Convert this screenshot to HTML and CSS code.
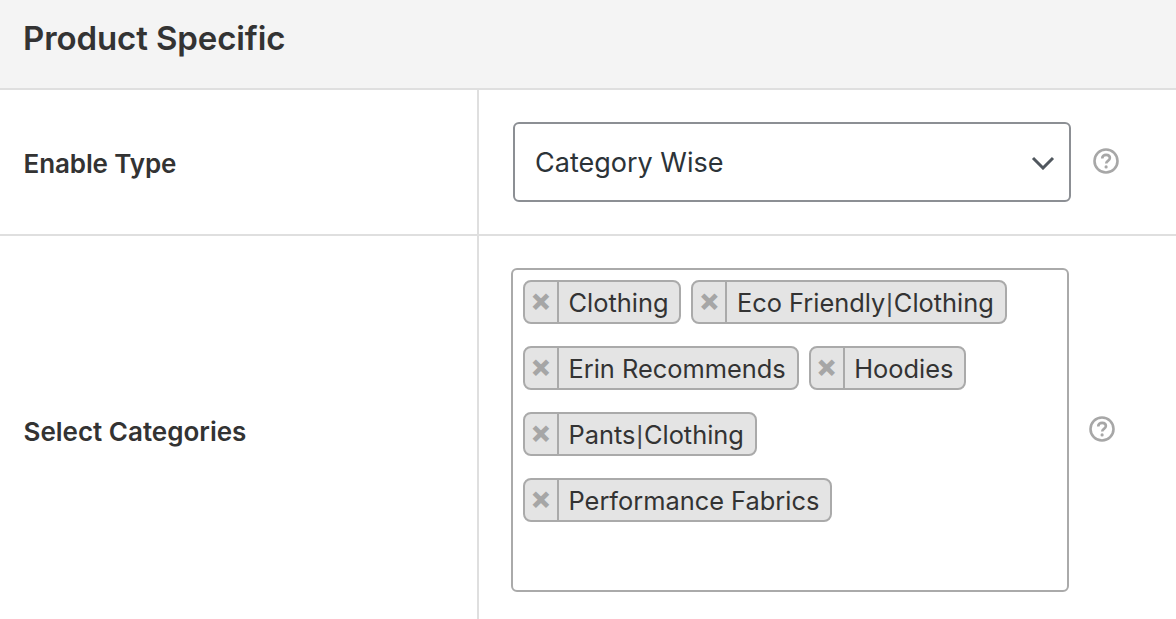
FILE: index.html
```html
<!DOCTYPE html>
<html lang="en">
<head>
    <meta charset="UTF-8">
    <meta name="viewport" content="width=device-width, initial-scale=1.0">
    <title>Product Specific</title>
    <link rel="stylesheet" href="styles.css">
</head>
<body>
    <h2 class="section-title">Product Specific</h2>

    <div class="row row-type">
        <div class="row-label">Enable Type</div>
        <div class="row-field">
            <div class="select-box">
                <span>Category Wise</span>
                <svg class="chevron" width="24" height="14" viewBox="0 0 24 14"><path d="M2 2l10 10L22 2" fill="none" stroke="#50575e" stroke-width="3"/></svg>
            </div>
            <svg class="help-icon" width="26" height="26" viewBox="0 0 26 26"><circle cx="13" cy="13" r="11.5" fill="none" stroke="#a7a7a7" stroke-width="2.6"/><path d="M9.2 10.4c0-2.2 1.7-3.5 3.900-3.500 2.200 0 3.800 1.300 3.800 3.200 0 2.800-3.700 2.700-3.700 5.300" fill="none" stroke="#a7a7a7" stroke-width="2.600"/><circle cx="13.100" cy="18.900" r="1.600" fill="#a7a7a7"/></svg>
        </div>
    </div>

    <div class="row row-cats">
        <div class="row-label">Select Categories</div>
        <div class="row-field">
            <div class="multi-box">
                <div class="tag-line">
                    <span class="tag"><span class="tag-x">×</span><span class="tag-text">Clothing</span></span>
                    <span class="tag"><span class="tag-x">×</span><span class="tag-text">Eco Friendly<span class="pipe">|</span>Clothing</span></span>
                </div>
                <div class="tag-line">
                    <span class="tag"><span class="tag-x">×</span><span class="tag-text">Erin Recommends</span></span>
                    <span class="tag"><span class="tag-x">×</span><span class="tag-text">Hoodies</span></span>
                </div>
                <div class="tag-line">
                    <span class="tag"><span class="tag-x">×</span><span class="tag-text">Pants<span class="pipe">|</span>Clothing</span></span>
                </div>
                <div class="tag-line">
                    <span class="tag"><span class="tag-x">×</span><span class="tag-text">Performance Fabrics</span></span>
                </div>
            </div>
            <svg class="help-icon help-icon-cats" width="26" height="26" viewBox="0 0 26 26"><circle cx="13" cy="13" r="11.5" fill="none" stroke="#a7a7a7" stroke-width="2.6"/><path d="M9.2 10.4c0-2.2 1.7-3.5 3.900-3.500 2.200 0 3.800 1.300 3.800 3.200 0 2.800-3.700 2.700-3.700 5.300" fill="none" stroke="#a7a7a7" stroke-width="2.600"/><circle cx="13.100" cy="18.900" r="1.600" fill="#a7a7a7"/></svg>
        </div>
    </div>
</body>
</html>
```

FILE: styles.css
```css
html, body {
    height: 100%;
}

body {
    margin: 0;
    background-color: #fff;
    color: #333;
    font-family: Inter, "Liberation Sans", sans-serif;
    overflow: hidden;
}

.section-title {
    margin: 0;
    height: 88px;
    padding: 0 0 0 23px;
    background-color: #f4f4f4;
    border-bottom: 2px solid #dfdfdf;
    font-size: 33px;
    font-weight: 600;
    line-height: 77px;
    letter-spacing: -0.1px;
}

.row {
    display: flex;
    border-bottom: 2px solid #dfdfdf;
}

.row-cats {
    border-bottom: none;
}

.row-type {
    height: 144px;
}

.row-label {
    width: 453.5px;
    padding-left: 23.5px;
    flex-shrink: 0;
    display: flex;
    align-items: center;
    border-right: 2px solid #dfdfdf;
    font-size: 26px;
    font-weight: 600;
    letter-spacing: 0;
}

.row-type .row-label {
    padding-top: 2px;
    letter-spacing: -0.1px;
}

.row-cats .row-label {
    padding-top: 8px;
}

.row-field {
    display: flex;
    align-items: center;
    flex: 1;
}

.row-type .row-field {
    padding-left: 34px;
}

.row-cats .row-field {
    padding: 32px 0 27px 32px;
}

.select-box {
    width: 558px;
    height: 80px;
    box-sizing: border-box;
    margin-top: -1px;
    padding: 1px 14px 0 20px;
    display: flex;
    align-items: center;
    justify-content: space-between;
    border: 2px solid #8c8f94;
    border-radius: 6px;
    color: #2c3338;
    font-size: 27px;
}

.chevron {
    margin-top: 1px;
}

.help-icon {
    margin-left: 22px;
    margin-top: -3px;
}

.help-icon-cats {
    margin-left: 20px;
    margin-top: -2px;
}

.multi-box {
    width: 558px;
    height: 324px;
    box-sizing: border-box;
    padding: 10px;
    border: 2px solid #aaa;
    border-radius: 6px;
}

.tag-line {
    display: flex;
    gap: 10px;
    margin-bottom: 22px;
}

.tag {
    display: flex;
    height: 44px;
    box-sizing: border-box;
    background-color: #e4e4e4;
    border: 2px solid #aaa;
    border-radius: 8px;
    font-size: 25.4px;
    line-height: 41px;
}

.tag-x {
    width: 34px;
    box-sizing: border-box;
    border-right: 2px solid #aaa;
    text-align: center;
    color: #a6a6a6;
    font-weight: 800;
    font-size: 31px;
    line-height: 35px;
}

.tag-text {
    padding: 0 11px 0 9.500px;
}

.pipe {
    font-family: "Liberation Sans", sans-serif;
    font-size: 25px;
    color: #444;
    padding: 0 1px;
}
```
